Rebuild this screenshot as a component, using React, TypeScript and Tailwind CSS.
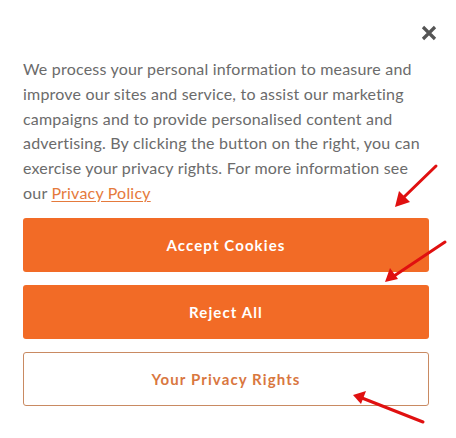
import React from "react";

export default function App() {
  return (
    <div className="relative w-[456px] h-[438px] bg-white overflow-hidden" style={{ fontFamily: "Lato, 'Open Sans', sans-serif" }}>
      <div className="flex flex-col pl-[23px] pr-[27px] pt-[25px]">
        <div className="flex justify-end">
          <button className="w-[16px] h-[16px] mr-[-8px]" aria-label="Close">
            <svg viewBox="0 0 16 16" width="16" height="16">
              <path d="M2 2 L14 14 M14 2 L2 14" stroke="#555" strokeWidth="3.2" strokeLinecap="butt" />
            </svg>
          </button>
        </div>
        <p className="mt-[16px] text-[16px] leading-[24.8px] tracking-[0.2px] text-[#6b6b6b]">
          We process your personal information to measure and improve our sites and service, to assist our marketing campaigns and to provide personalised content and advertising. By clicking the button on the right, you can exercise your privacy rights. For more information see our{" "}
          <a className="text-[#e57a3c] underline underline-offset-2">Privacy Policy</a>
        </p>
        <div className="mt-[12px] flex flex-col gap-[13px]">
          <button className="h-[54px] w-full rounded-[3px] bg-[#f26b26] text-white font-bold text-[15px] tracking-[1.1px]">Accept Cookies</button>
          <button className="h-[54px] w-full rounded-[3px] bg-[#f26b26] text-white font-bold text-[15px] tracking-[1.1px]">Reject All</button>
          <button className="h-[54px] w-full rounded-[3px] border border-[#c98a62] bg-white text-[#d9773f] font-bold text-[15px] tracking-[1.1px]">Your Privacy Rights</button>
        </div>
      </div>
      <svg className="absolute inset-0 pointer-events-none" width="456" height="438" viewBox="0 0 456 438">
        <g stroke="#e01010" strokeWidth="3" strokeLinecap="round" fill="#e01010">
          <line x1="436" y1="166" x2="403" y2="198" />
          <polygon points="395,207 399,191 410,202" stroke="none" />
          <line x1="445" y1="242" x2="394" y2="276" />
          <polygon points="385,282 390,268 398,279" stroke="none" />
          <line x1="423" y1="422" x2="362" y2="398" />
          <polygon points="353,395 366,391 361,404" stroke="none" />
        </g>
      </svg>
    </div>
  );
}
